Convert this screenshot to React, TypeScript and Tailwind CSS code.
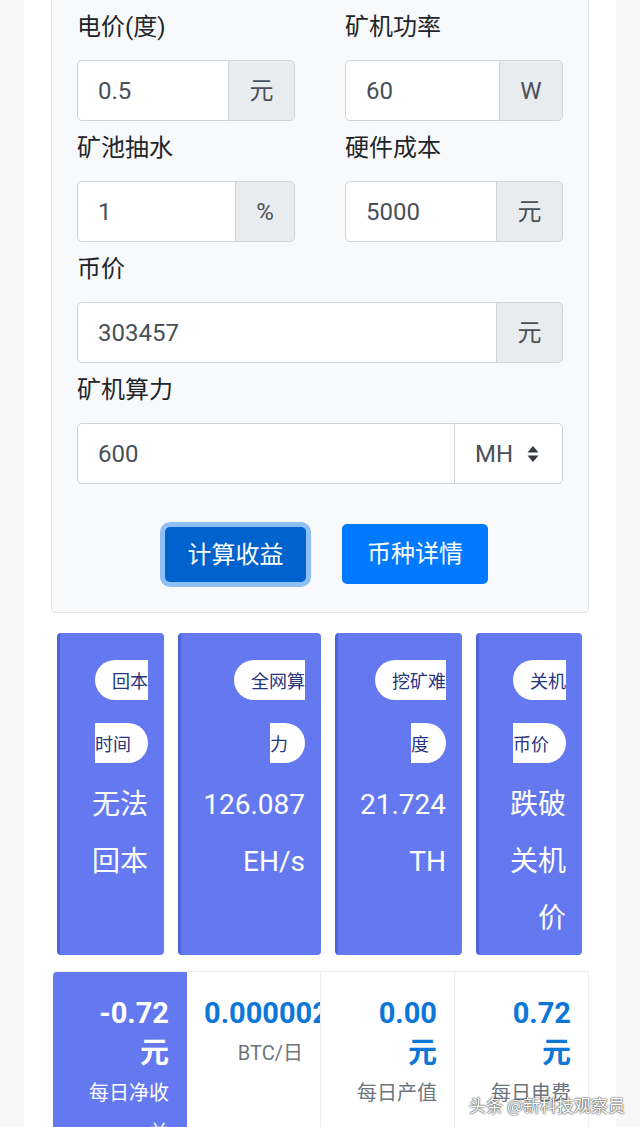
import React from "react";

const inputCls =
  "min-w-0 flex-1 h-[61px] bg-white border border-[#ced4da] rounded-l-[5px] pl-[20px] flex items-center text-[24px] text-[#495057]";
const addonCls =
  "h-[61px] -ml-px bg-[#e9ecef] border border-[#ced4da] rounded-r-[5px] flex items-center justify-center text-[24px] text-[#495057]";

const Field = ({
  label,
  value,
  unit,
  unitW,
}: {
  label: string;
  value: string;
  unit: string;
  unitW: string;
}) => (
  <div className="mt-[9px]">
    <div className="h-[36px] leading-[36px] text-[24px] text-[#212529]">{label}</div>
    <div className="mt-[15px] flex">
      <div className={inputCls}>{value}</div>
      <div className={`${addonCls} ${unitW}`}>{unit}</div>
    </div>
  </div>
);

const stats = [
  { w: "w-[107px]", cw: "w-[58px]", badge: "回本时间", value: "无法回本" },
  { w: "w-[143px]", cw: "w-[104px]", badge: "全网算力", value: "126.087 EH/s" },
  { w: "w-[127px]", cw: "w-[90px]", badge: "挖矿难度", value: "21.724 TH" },
  { w: "w-[106px]", cw: "w-[58px]", badge: "关机币价", value: "跌破关机价" },
];

const App = () => {
  return (
    <div className="relative w-[640px] h-[1127px] overflow-hidden bg-[#f8f8f8] flex justify-center font-['Roboto','Noto_Sans_CJK_SC',sans-serif]">
      <div className="w-[592px] bg-white px-[27px]">
        {/* form card */}
        <div className="-mt-[10px] bg-[#f8f9fa] border border-[#dfe1e3] rounded-[5px] px-[25px] pt-[9px] pb-[28px]">
          <div className="grid grid-cols-2 gap-x-[50px]">
            <Field label="电价(度)" value="0.5" unit="元" unitW="w-[67px]" />
            <Field label="矿机功率" value="60" unit="W" unitW="w-[64px]" />
            <Field label="矿池抽水" value="1" unit="%" unitW="w-[60px]" />
            <Field label="硬件成本" value="5000" unit="元" unitW="w-[67px]" />
          </div>
          <Field label="币价" value="303457" unit="元" unitW="w-[67px]" />
          <div className="mt-[9px]">
            <div className="h-[36px] leading-[36px] text-[24px] text-[#212529]">矿机算力</div>
            <div className="mt-[15px] flex">
              <div className={inputCls}>600</div>
              <div className="h-[61px] w-[109px] -ml-px bg-white border border-[#ced4da] rounded-r-[5px] flex items-center pl-[20px] gap-[14px] text-[24px] text-[#495057]">
                MH
                <svg width="12" height="18" viewBox="0 0 12 18">
                  <path d="M6 1 L11.5 7.5 H0.5 Z" fill="#343a40" />
                  <path d="M6 17 L11.5 10.5 H0.5 Z" fill="#343a40" />
                </svg>
              </div>
            </div>
          </div>
          <div className="mt-[43px] flex justify-center gap-[36px] pl-[13px]">
            <button className="h-[55px] w-[141px] rounded-[5px] bg-[#0062cc] text-white text-[24px] ring-[5px] ring-[#8ec0f6]">
              计算收益
            </button>
            <button className="h-[60px] -mt-[3px] w-[146px] rounded-[5px] bg-[#007bff] text-white text-[24px]">
              币种详情
            </button>
          </div>
        </div>

        {/* stat cards */}
        <div className="mt-[20px] flex gap-[14px] px-[6px]">
          {stats.map((s) => (
            <div
              key={s.badge}
              className={`${s.w} h-[322px] bg-[#6479f0] border-l-[3px] border-[#4e63d8] rounded-[4px] pt-[17px] pr-[16px] flex flex-col items-end`}
            >
              <div className={`${s.cw} text-right leading-[60px]`}>
                <span className="bg-white rounded-full px-[17px] py-[7px] text-[18px] text-[#27357e] font-['Noto_Sans_CJK_SC',sans-serif]">
                  {s.badge}
                </span>
              </div>
              <div className={`${s.cw} text-right text-[28px] leading-[57px] text-white`}>
                {s.value}
              </div>
            </div>
          ))}
        </div>

        {/* result row */}
        <div className="mt-[16px] ml-[2px] grid grid-cols-4 border-t border-[#eceeef] h-[200px]">
          <div className="bg-[#6479f0] rounded-tl-[4px] pt-[21px] pr-[18px] text-right leading-[40px] text-white">
            <div className="text-[29px] font-bold">-0.72</div>
            <div className="text-[29px] font-bold">元</div>
            <div className="ml-auto w-[84px] text-[20px]">每日净收益</div>
          </div>
          <div className="border-r border-[#eceeef] pt-[21px] px-[17px] text-right leading-[40px] overflow-hidden">
            <div className="text-[29px] font-bold text-[#0c77d6] whitespace-nowrap">0.00000231</div>
            <div className="text-[20px] text-[#6c757d]">BTC/日</div>
          </div>
          <div className="border-r border-[#eceeef] pt-[21px] pr-[17px] text-right leading-[40px]">
            <div className="text-[29px] font-bold text-[#0c77d6]">0.00</div>
            <div className="text-[29px] font-bold text-[#0c77d6]">元</div>
            <div className="text-[20px] text-[#6c757d]">每日产值</div>
          </div>
          <div className="border-r border-[#eceeef] pt-[21px] pr-[17px] text-right leading-[40px]">
            <div className="text-[29px] font-bold text-[#0c77d6]">0.72</div>
            <div className="text-[29px] font-bold text-[#0c77d6]">元</div>
            <div className="text-[20px] text-[#6c757d]">每日电费</div>
          </div>
        </div>
      </div>

      {/* watermark */}
      <div className="absolute right-[15px] bottom-[10px] text-[17px] text-white [text-shadow:0_0_2px_#333,0_0_1px_#333] font-['Noto_Sans_CJK_SC',sans-serif]">
        头条 @新科技观察员
      </div>
    </div>
  );
};

export default App;
